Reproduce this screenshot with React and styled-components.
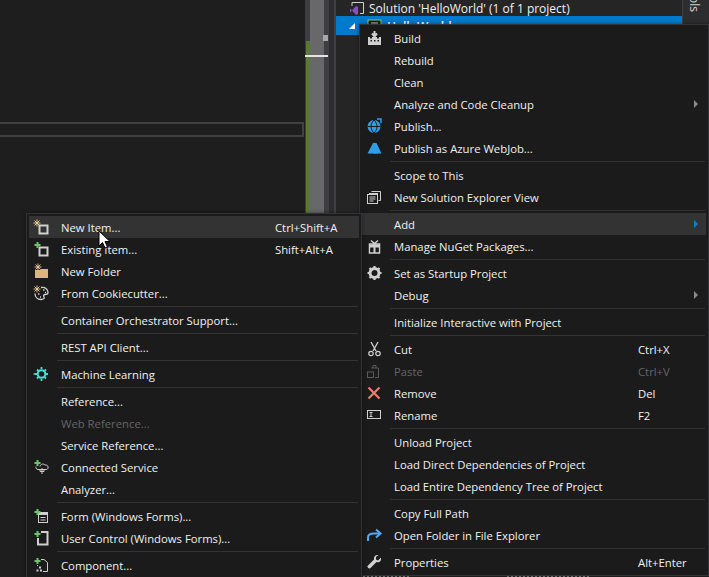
import React from 'react';
import styled, { createGlobalStyle } from 'styled-components';

const Global = createGlobalStyle`
  html, body { margin: 0; padding: 0; background: #1e1e1e; }
  body { width: 709px; height: 577px; overflow: hidden; font-family: "Open Sans", "Liberation Sans", sans-serif; }
`;

const Page = styled.div`
  position: relative;
  display: flex;
  width: 709px;
  height: 577px;
  overflow: hidden;
`;
const Editor = styled.div`
  flex: 0 0 305px;
  padding-top: 122px;
  background: #1e1e1e;
`;
const CurrentLine = styled.div`
  height: 11px;
  border: 2px solid #414141;
  border-left: 0;
  margin-right: 1px;
`;
const Margin = styled.div`
  position: relative;
  flex: 0 0 31px;
  display: flex;
  background: #2d2d30;
`;
const DiffTrack = styled.div`
  flex: 0 0 5px;
  background: #3e3e42;
  display: flex;
  flex-direction: column;
  justify-content: flex-end;
  align-items: flex-end;
`;
const DiffBar = styled.div`
  width: 4px;
  height: 536px;
  background: #5a7a32;
`;
const Thumb = styled.div`
  flex: 0 0 14px;
  background: #686868;
`;
const Rail = styled.div`
  flex: 0 0 5px;
  background: #3e3e42;
`;
const RailEdge = styled.div`
  flex: 0 0 5px;
  background: #2d2d30;
  border-right: 2px solid #3f3f46;
`;
const Caret = styled.div`
  position: absolute;
  left: 0;
  top: 55px;
  width: 23px;
  height: 2px;
  background: #e4e4e4;
`;
const Marker = styled.div`
  position: absolute;
  left: 18px;
  top: 35px;
  width: 5px;
  height: 6px;
  background: #a8a8a8;
`;
const Explorer = styled.div`
  flex: 1;
  display: flex;
  flex-direction: column;
  background: #252526;
  color: #f1f1f1;
  font-size: 12px;
`;
const TreeRow = styled.div`
  display: flex;
  box-sizing: border-box;
  height: 19px;
  background: ${p => (p.$selected ? '#007acc' : 'transparent')};
  margin-right: 27px;
`;
const SolutionRow = styled(TreeRow)`
  height: 16px;
  align-items: center;
  padding-left: 13px;
  gap: 4px;
`;
const ProjectRow = styled(TreeRow)`
  padding: 3px 0 0 13px;
  overflow: hidden;
`;
const Expander = styled.svg`
  margin-top: 4px;
`;
const ProjectIcon = styled.svg`
  margin: 0 5px 0 12px;
`;
const ProjectName = styled.span`
  font-weight: 600;
  line-height: 16px;
  color: #ffffff;
`;
const Footer = styled.div`
  display: flex;
  margin-top: auto;
  height: 1px;
`;
const Fragment = styled.div`
  width: ${p => p.$width}px;
  margin-left: ${p => p.$gap}px;
  background: repeating-linear-gradient(90deg, #8a8a8a 0 2px, #252526 2px 4px);
`;
const SideTab = styled.div`
  position: absolute;
  right: 0;
  top: 0;
  width: 27px;
  height: 24px;
  background: #2d2d30;
  border-left: 1px solid #3f3f46;
  color: #d0d0d0;
  font-size: 12px;
  overflow: hidden;
  box-sizing: border-box;
`;
const SideLabel = styled.span`
  display: block;
  transform: rotate(90deg);
  width: 16px;
  margin: -3px 0 0 3px;
  line-height: 14px;
`;

const MenuBox = styled.div`
  position: absolute;
  box-sizing: border-box;
  left: ${p => p.$left}px;
  top: ${p => p.$top}px;
  width: ${p => p.$width}px;
  padding: 2px;
  background: #1b1b1c;
  border: 1px solid #333337;
  box-shadow: 0 0 4px rgba(0, 0, 0, 0.45);
  color: #f1f1f1;
  font-size: 11.3px;
`;
const Row = styled.div`
  display: grid;
  grid-template-columns: 32px 1fr ${p => p.$keys}px 17px;
  align-items: center;
  height: 22px;
  background: ${p => (p.$hover ? '#333334' : 'transparent')};
  color: ${p => (p.$off ? '#656565' : '#f1f1f1')};
  white-space: nowrap;
`;
const IconCell = styled.div`
  display: flex;
  align-items: center;
  height: 16px;
  padding-left: 4px;
`;
const ArrowCell = styled.div`
  display: flex;
  justify-content: flex-end;
  padding-right: 8px;
`;
const Arrow = styled.div`
  width: 0;
  height: 0;
  border-left: 4px solid ${p => (p.$active ? '#0e7fd1' : '#8a8a8a')};
  border-top: 4px solid transparent;
  border-bottom: 4px solid transparent;
`;
const Sep = styled.div`
  height: 1px;
  margin: 2px 1px 2px 28px;
  background: #333337;
`;
const Cursor = styled.svg`
  position: absolute;
  left: 98px;
  top: 230px;
`;

const Ico = ({ children, op }) => (
  <svg width="17" height="16" viewBox="0 0 17 16" opacity={op} fill="none">{children}</svg>
);

const G = '#d0d0d0';
const Spark = ({ x = 4, y = 4 }) => (
  <path d={`M${x} ${y - 3.500}v7M${x - 3.500} ${y}h7M${x - 2.500} ${y - 2.500}l5 5M${x + 2.500} ${y - 2.500}l-5 5`} stroke="#f4cf8e" strokeWidth="0.900" />
);
const Plus = () => <path d="M4.500 1v6M1.500 4h6" stroke="#6cc36c" strokeWidth="2" />;

const icons = {
  build: <Ico><path d="M8.500 1v4M6 3.500l2.500 3 2.500-3" stroke={G} strokeWidth="2" /><path d="M2 7h2v1.500h2V7h5v1.500h2V7h2v8H2z" fill={G} /><path d="M4.500 10h1.500v1.500H4.500zM8 10h1.500v1.500H8zM11.500 10H13v1.500h-1.500z" fill="#1b1b1c" /></Ico>,
  globe: <Ico><circle cx="8" cy="8.500" r="6.500" fill="#2e9fe6" /><path d="M1.500 8.500h13M8 2c-4 4-4 9 0 13M8 2c4 4 4 9 0 13" stroke="#1b1b1c" strokeWidth="1" /><path d="M11 1h4v4" stroke="#2e9fe6" strokeWidth="1.500" /></Ico>,
  azure: <Ico><path d="M7 3h3.500l5 10.500H6.500l4-1.500L8 7.500 4.500 13.500h-3z" fill="#2e9fe6" /><path d="M7.500 4L4 13.500h8z" fill="#2e9fe6" /></Ico>,
  view: <Ico><path d="M5.500 2.500h9v9h-2M3 4.500h9" stroke={G} /><rect x="1.500" y="5.500" width="10" height="9" stroke={G} /><path d="M3.500 8h6M3.500 10h6M3.500 12h4" stroke={G} /></Ico>,
  nuget: <Ico><path d="M3.500 6h10v9h-10zM5 2.500l3.500 3 3.500-3" stroke={G} strokeWidth="1.500" /><path d="M3 6.500h11v3H3zM7.500 6h2v9h-2z" fill={G} /><path d="M4.500 10.500h2.500v3.500H4.500zM10 10.500h2.500v3.500H10z" fill="#1b1b1c" /></Ico>,
  gear: <Ico><circle cx="8.500" cy="8" r="4.500" stroke={G} strokeWidth="3" /><path d="M8.500 1v2.500M8.500 12.500V15M1.500 8H4M13 8h2.500M3.500 3l2 2M11.500 11l2 2M13.500 3l-2 2M5.500 11l-2 2" stroke={G} strokeWidth="2.200" /></Ico>,
  cut: <Ico><path d="M5 1l5 9M12 1L7 10" stroke={G} strokeWidth="1.300" /><circle cx="5" cy="12.500" r="2.200" stroke={G} strokeWidth="1.200" /><circle cx="12" cy="12.500" r="2.200" stroke={G} strokeWidth="1.200" /></Ico>,
  paste: <Ico op={0.35}><path d="M7 5V2.500h3V5M5 5h7.500v9.500H9" stroke={G} /><rect x="1.500" y="9" width="6" height="5.500" stroke={G} /></Ico>,
  remove: <Ico><path d="M2.500 2.500l11 11M13.500 2.500l-11 11" stroke="#ef7a6f" strokeWidth="2.200" /></Ico>,
  rename: <Ico><rect x="1.500" y="3.500" width="13" height="8" stroke={G} /><path d="M3.500 5.500h3M3.500 9.500h3M5 5.500v4" stroke={G} /></Ico>,
  open: <Ico><path d="M2 14V10.500C2 7.500 4.500 6.500 8 6.500h5" stroke="#56a8ec" strokeWidth="2" /><path d="M10 2.500l4.500 4-4.500 4" stroke="#56a8ec" strokeWidth="2" /></Ico>,
  wrench: <Ico><path d="M15 3.500L12 6.500 10 5.500 10 3 12.500 1C9.500 0.500 7.500 2.500 8 5.500L1.500 12C1 13 2.500 15 4 14.500L10.500 8C13.500 9 15.500 7 15 3.500z" fill={G} /></Ico>,
  newItem: <Ico><rect x="6.500" y="6.500" width="8" height="8" stroke={G} strokeWidth="2" /><Spark /></Ico>,
  existing: <Ico><rect x="6.500" y="6.500" width="8" height="8" stroke={G} strokeWidth="2" /><Plus /></Ico>,
  folder: <Ico><path d="M2 7h5l1-1h7v9H2z" fill="#dcb67a" /><Spark x={5} /></Ico>,
  cookie: <Ico><path d="M8 2.500c4-1 7 2 7 5 0 2-2 2-3 2s-2 1-1 2.500-1 2.500-3 2.500c-3.500 0-6-2.500-6-6" stroke={G} strokeWidth="1.300" /><Spark /><path d="M10 5h1.500M12 7.500h1M7 12h1M5 9h1.500" stroke={G} strokeWidth="1.500" /></Ico>,
  ml: <Ico><circle cx="8.500" cy="8" r="3.800" stroke="#3fe0d0" strokeWidth="2" /><path d="M8.500 1v2M8.500 13v2M2 8h2M13 8h2M4 3.500l1.500 1.500M11.500 11l1.500 1.500M13 3.500L11.500 5M5.500 11L4 12.500" stroke="#3fe0d0" strokeWidth="1.800" /><path d="M0.500 8h2" stroke="#3fe0d0" strokeWidth="1.500" /></Ico>,
  connected: <Ico><path d="M7 7.500c0-2 3-3.500 5-1.500 2-.3 3.500 1 3 3-.2 1-1 1.500-2 1.500H5C3.500 10.500 2.500 9 3 7.500" stroke={G} /><path d="M9 9v6M7 10.500h4v2H7z" stroke={G} /><Plus /></Ico>,
  form: <Ico><rect x="5.500" y="4.500" width="9" height="10" stroke={G} /><path d="M6 5h8v2H6z" fill={G} /><path d="M7.500 9.500h5M7.500 12h5" stroke={G} /><Plus /></Ico>,
  user: <Ico><path d="M8 2h6.500v12.500H5V8" stroke={G} strokeWidth="2" /><Plus /></Ico>,
  component: <Ico><path d="M8 2.500h3l3.500 3v9H10M4.500 8v1" stroke={G} /><path d="M6 9.500h2v2H6zM3.500 12.500h2v2h-2zM7 12.500h2v2H7z" fill={G} /><Plus /></Ico>,
};

const mainMenu = [
  { t: 'Build', i: 'build' }, { t: 'Rebuild' }, { t: 'Clean' },
  { t: 'Analyze and Code Cleanup', more: true },
  { t: 'Publish...', i: 'globe' }, { t: 'Publish as Azure WebJob...', i: 'azure' },
  null,
  { t: 'Scope to This' }, { t: 'New Solution Explorer View', i: 'view' },
  null,
  { t: 'Add', more: true, hover: true },
  { t: 'Manage NuGet Packages...', i: 'nuget' },
  null,
  { t: 'Set as Startup Project', i: 'gear' }, { t: 'Debug', more: true },
  null,
  { t: 'Initialize Interactive with Project' },
  null,
  { t: 'Cut', i: 'cut', k: 'Ctrl+X' }, { t: 'Paste', i: 'paste', k: 'Ctrl+V', off: true },
  { t: 'Remove', i: 'remove', k: 'Del' }, { t: 'Rename', i: 'rename', k: 'F2' },
  null,
  { t: 'Unload Project' }, { t: 'Load Direct Dependencies of Project' }, { t: 'Load Entire Dependency Tree of Project' },
  null,
  { t: 'Copy Full Path' }, { t: 'Open Folder in File Explorer', i: 'open' },
  null,
  { t: 'Properties', i: 'wrench', k: 'Alt+Enter' },
];

const addMenu = [
  { t: 'New Item...', i: 'newItem', k: 'Ctrl+Shift+A', hover: true },
  { t: 'Existing Item...', i: 'existing', k: 'Shift+Alt+A' },
  { t: 'New Folder', i: 'folder' }, { t: 'From Cookiecutter...', i: 'cookie' },
  null,
  { t: 'Container Orchestrator Support...' },
  null,
  { t: 'REST API Client...' },
  null,
  { t: 'Machine Learning', i: 'ml' },
  null,
  { t: 'Reference...' }, { t: 'Web Reference...', off: true }, { t: 'Service Reference...' },
  { t: 'Connected Service', i: 'connected' }, { t: 'Analyzer...' },
  null,
  { t: 'Form (Windows Forms)...', i: 'form' }, { t: 'User Control (Windows Forms)...', i: 'user' },
  null,
  { t: 'Component...', i: 'component' },
];

const Menu = ({ items, left, top, width, keys }) => (
  <MenuBox $left={left} $top={top} $width={width}>
    {items.map((item, n) => item === null ? <Sep key={n} /> : (
      <Row key={n} $keys={keys} $hover={item.hover} $off={item.off}>
        <IconCell>{item.i && icons[item.i]}</IconCell>
        <span>{item.t}</span>
        <span>{item.k}</span>
        <ArrowCell>{item.more && <Arrow $active={item.hover} />}</ArrowCell>
      </Row>
    ))}
  </MenuBox>
);

export default function App() {
  return (
    <Page>
      <Global />
      <Editor><CurrentLine /></Editor>
      <Margin>
        <DiffTrack><DiffBar /></DiffTrack>
        <Thumb />
        <Rail />
        <RailEdge />
        <Caret />
        <Marker />
      </Margin>
      <Explorer>
        <SolutionRow>
          <svg width="16" height="14" viewBox="0 0 16 14" fill="none">
            <path d="M3 5V1.500h11.500v11H11" stroke="#d0d0d0" />
            <path d="M1 7.500l2 2 4-4.500 2 1v7l-2 1-4-4.500-2 2z" fill="#8a4fc7" />
          </svg>
          <span>Solution 'HelloWorld' (1 of 1 project)</span>
        </SolutionRow>
        <ProjectRow $selected>
          <Expander width="6" height="6" viewBox="0 0 6 6"><path d="M6 0v6H0z" fill="#fff" /></Expander>
          <ProjectIcon width="15" height="14" viewBox="0 0 15 14" fill="none">
            <rect x="1" y="1" width="13" height="12" fill="#1e1e1e" stroke="#7ec97e" />
            <path d="M4 4h7" stroke="#d0d0d0" />
          </ProjectIcon>
          <ProjectName>HelloWorld</ProjectName>
        </ProjectRow>
        <Footer>
          <Fragment $gap={27} $width={47} />
          <Fragment $gap={97} $width={83} />
        </Footer>
      </Explorer>
      <SideTab><SideLabel>ols</SideLabel></SideTab>
      <Menu items={mainMenu} left={359} top={24} width={350} keys={51} />
      <Menu items={addMenu} left={26} top={213} width={336} keys={67} />
      <Cursor width="13" height="19" viewBox="0 0 13 19">
        <path d="M1 1v15l3.500-3.500 2.500 5.500 2.500-1-2.500-5.500h5z" fill="#fff" stroke="#000" />
      </Cursor>
    </Page>
  );
}
